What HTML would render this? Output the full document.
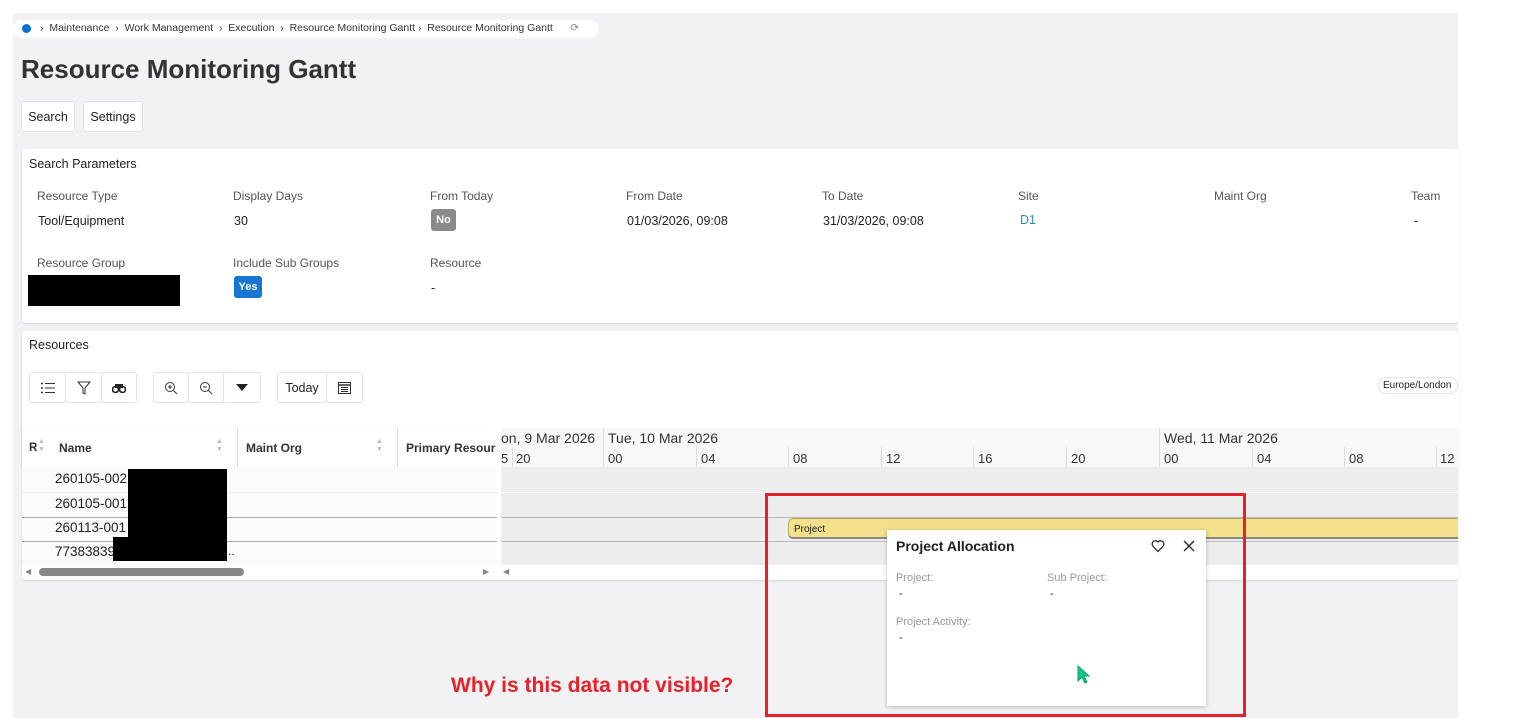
<!DOCTYPE html>
<html><head><meta charset="utf-8"><style>
*{margin:0;padding:0;box-sizing:border-box}
body{width:1522px;height:718px;background:#fff;font-family:"Liberation Sans",sans-serif;color:#222;position:relative;overflow:hidden}
.a{position:absolute}
.t{font-size:12px;color:#555}
.v{font-size:12.5px;color:#222}
.btn{position:absolute;background:#fff;border:1px solid #e2e2e6;border-radius:3px;font-size:12.5px;display:flex;align-items:center;justify-content:center}
.hr{position:absolute;height:1px;background:#ccc}
.tick{position:absolute;top:447px;height:20px;width:1px;background:#ddd}
.tl{position:absolute;top:451px;font-size:13px;color:#333}
</style></head><body>
<div class="a" style="left:13px;top:13px;width:1445px;height:705px;background:#f2f2f4"></div>
<div class="a" style="left:13px;top:20px;width:586px;height:18px;background:#fff;border-radius:9px"></div>
<div class="a" style="left:22px;top:24px;width:9px;height:9px;border-radius:50%;background:#0b6fd0"></div>
<div class="a" style="left:40px;top:22px;font-size:10.5px;color:#333;white-space:nowrap">›&nbsp; Maintenance &nbsp;›&nbsp; Work Management &nbsp;›&nbsp; Execution &nbsp;›&nbsp; Resource Monitoring Gantt › &nbsp;Resource Monitoring Gantt &nbsp;&nbsp;&nbsp;&nbsp; <span style="color:#888">⟳</span></div>
<div class="a" style="left:21px;top:54px;font-size:26px;font-weight:bold;color:#333">Resource Monitoring Gantt</div>
<div class="btn" style="left:21px;top:101px;width:54px;height:31px">Search</div>
<div class="btn" style="left:83px;top:101px;width:60px;height:31px">Settings</div>

<div class="a" style="left:22px;top:149px;width:1436px;height:174px;background:#fff;border-radius:3px;box-shadow:0 1px 2px rgba(0,0,0,.12)"></div>
<div class="a" style="left:29px;top:157px;font-size:12.5px;color:#222">Search Parameters</div>
<div class="a t" style="left:37px;top:189px">Resource Type</div><div class="a v" style="left:38px;top:214px">Tool/Equipment</div>
<div class="a t" style="left:233px;top:189px">Display Days</div><div class="a v" style="left:234px;top:214px">30</div>
<div class="a t" style="left:430px;top:189px">From Today</div>
<div class="a" style="left:431px;top:209px;width:25px;height:22px;background:#8a8a8a;border-radius:3px;color:#fff;font-size:11px;font-weight:bold;text-align:center;line-height:22px">No</div>
<div class="a t" style="left:626px;top:189px">From Date</div><div class="a v" style="left:627px;top:214px">01/03/2026, 09:08</div>
<div class="a t" style="left:822px;top:189px">To Date</div><div class="a v" style="left:823px;top:214px">31/03/2026, 09:08</div>
<div class="a t" style="left:1018px;top:189px">Site</div><div class="a v" style="left:1020px;top:213px;color:#2a8ac0">D1</div>
<div class="a t" style="left:1214px;top:189px">Maint Org</div>
<div class="a t" style="left:1411px;top:189px">Team</div><div class="a v" style="left:1414px;top:214px">-</div>
<div class="a t" style="left:37px;top:256px">Resource Group</div>
<div class="a" style="left:28px;top:275px;width:152px;height:31px;background:#000"></div>
<div class="a t" style="left:233px;top:256px">Include Sub Groups</div>
<div class="a" style="left:234px;top:276px;width:28px;height:22px;background:#1776d2;border-radius:3px;color:#fff;font-size:11px;font-weight:bold;text-align:center;line-height:22px">Yes</div>
<div class="a t" style="left:430px;top:256px">Resource</div><div class="a v" style="left:431px;top:281px">-</div>

<div class="a" style="left:22px;top:331px;width:1436px;height:249px;background:#fff;border-radius:3px;box-shadow:0 1px 2px rgba(0,0,0,.12)"></div>
<div class="a" style="left:29px;top:338px;font-size:12.5px">Resources</div>
<div class="btn" style="left:29px;top:372px;width:37px;height:31px"><svg width="14" height="12" viewBox="0 0 14 12"><path d="M4 1.5h10M4 6h10M4 10.5h10" stroke="#333"/><path d="M0 1.5h2M0 6h2M0 10.5h2" stroke="#333" stroke-width="1.5"/></svg></div>
<div class="btn" style="left:65px;top:372px;width:37px;height:31px"><svg width="14" height="14" viewBox="0 0 14 14"><path d="M1 1h12L8 7v6L6 12V7z" fill="none" stroke="#333" stroke-width="1"/></svg></div>
<div class="btn" style="left:101px;top:372px;width:36px;height:31px"><svg width="14" height="10" viewBox="0 0 14 10"><circle cx="3.5" cy="6.5" r="3" fill="none" stroke="#222" stroke-width="1.6"/><circle cx="10.5" cy="6.5" r="3" fill="none" stroke="#222" stroke-width="1.6"/><path d="M3 1h8v4H3z" fill="#222"/></svg></div>
<div class="btn" style="left:153px;top:372px;width:36px;height:31px"><svg width="14" height="14" viewBox="0 0 14 14"><circle cx="6" cy="6" r="4.5" fill="none" stroke="#333"/><path d="M9.5 9.5L13 13M4 6h4M6 4v4" stroke="#333"/></svg></div>
<div class="btn" style="left:188px;top:372px;width:36px;height:31px"><svg width="14" height="14" viewBox="0 0 14 14"><circle cx="6" cy="6" r="4.5" fill="none" stroke="#333"/><path d="M9.5 9.5L13 13M4 6h4" stroke="#333"/></svg></div>
<div class="btn" style="left:223px;top:372px;width:38px;height:31px"><svg width="12" height="7"><path d="M0 0h12L6 7z" fill="#222"/></svg></div>
<div class="btn" style="left:277px;top:372px;width:50px;height:31px">Today</div>
<div class="btn" style="left:326px;top:372px;width:37px;height:31px"><svg width="13" height="13" viewBox="0 0 13 13"><rect x="0.5" y="1.5" width="12" height="11" fill="none" stroke="#333"/><path d="M0.5 4h12" stroke="#333" stroke-width="1.5"/><path d="M3 6.5h7M3 8.5h7M3 10.5h7" stroke="#333"/></svg></div>
<div class="a" style="left:1378px;top:377px;width:80px;height:17px;border:1px solid #e4e4e4;border-radius:8px;font-size:10px;line-height:15px;padding-left:4px">Europe/London</div>

<!-- grid -->
<div class="a" style="left:22px;top:428px;width:475px;height:39px;background:#fff;box-shadow:0 1px 2px rgba(0,0,0,.1)"></div>
<div class="a" style="left:29px;top:442px;font-size:11.5px;font-weight:bold;color:#333">R</div>
<div class="a" style="left:38px;top:438px;font-size:7px;color:#bbb;line-height:8px">▲<br>▼</div>
<div class="a" style="left:59px;top:441px;font-size:12px;font-weight:bold;color:#333">Name</div>
<div class="a" style="left:216px;top:438px;font-size:7px;color:#bbb;line-height:8px">▲<br>▼</div>
<div class="a" style="left:237px;top:428px;width:1px;height:39px;background:#ddd"></div>
<div class="a" style="left:246px;top:441px;font-size:12px;font-weight:bold;color:#333">Maint Org</div>
<div class="a" style="left:376px;top:438px;font-size:7px;color:#bbb;line-height:8px">▲<br>▼</div>
<div class="a" style="left:397px;top:428px;width:1px;height:39px;background:#ddd"></div>
<div class="a" style="left:406px;top:441px;font-size:12px;font-weight:bold;color:#333;width:90px;overflow:hidden;white-space:nowrap">Primary Resource</div>
<div class="a" style="left:22px;top:467px;width:475px;height:98px;background:#fafafa"></div>
<div class="hr" style="left:22px;top:492px;width:475px;background:#eee"></div>
<div class="hr" style="left:22px;top:517px;width:475px;background:#aaa"></div>
<div class="hr" style="left:22px;top:541px;width:475px;background:#aaa"></div>
<div class="a v" style="left:55px;top:471px;font-size:13.5px">260105-002</div>
<div class="a v" style="left:55px;top:496px;font-size:13.5px">260105-001</div>
<div class="a v" style="left:55px;top:520px;font-size:13.5px">260113-001</div>
<div class="a v" style="left:55px;top:544px;font-size:13.5px">77383839</div>
<div class="a v" style="left:228px;top:544px;font-size:12px">..</div>
<div class="a" style="left:128px;top:469px;width:99px;height:68px;background:#000"></div>
<div class="a" style="left:113px;top:537px;width:114px;height:24px;background:#000"></div>
<div class="a" style="left:25px;top:567px;font-size:8px;color:#888">◀</div>
<div class="a" style="left:39px;top:568px;width:205px;height:8px;background:#888;border-radius:4px"></div>
<div class="a" style="left:483px;top:567px;font-size:8px;color:#888">▶</div>

<!-- gantt -->
<div class="a" style="left:501px;top:428px;width:957px;height:39px;background:#f8f8f8"></div>
<div class="a" style="left:501px;top:467px;width:957px;height:98px;background:#ededed"></div>
<div class="hr" style="left:501px;top:492px;width:957px;background:#fff"></div>
<div class="hr" style="left:501px;top:517px;width:957px;background:#bbb"></div>
<div class="hr" style="left:501px;top:541px;width:957px;background:#bbb"></div>
<div class="a" style="left:503px;top:567px;font-size:8px;color:#888">◀</div>
<div class="a" style="left:501px;top:430px;font-size:14px;color:#333">on, 9 Mar 2026</div>
<div class="a" style="left:603px;top:428px;width:1px;height:39px;background:#ddd"></div>
<div class="a" style="left:608px;top:430px;font-size:14px;color:#333">Tue, 10 Mar 2026</div>
<div class="a" style="left:1159px;top:428px;width:1px;height:39px;background:#ddd"></div>
<div class="a" style="left:1164px;top:430px;font-size:14px;color:#333">Wed, 11 Mar 2026</div>
<div class="tl" style="left:501px">5</div><div class="tick" style="left:512px"></div><div class="tl" style="left:516px">20</div>
<div class="tl" style="left:608px">00</div>
<div class="tick" style="left:696px"></div><div class="tl" style="left:701px">04</div>
<div class="tick" style="left:788px"></div><div class="tl" style="left:793px">08</div>
<div class="tick" style="left:881px"></div><div class="tl" style="left:886px">12</div>
<div class="tick" style="left:973px"></div><div class="tl" style="left:978px">16</div>
<div class="tick" style="left:1066px"></div><div class="tl" style="left:1071px">20</div>
<div class="tl" style="left:1164px">00</div>
<div class="tick" style="left:1252px"></div><div class="tl" style="left:1257px">04</div>
<div class="tick" style="left:1344px"></div><div class="tl" style="left:1349px">08</div>
<div class="tick" style="left:1436px"></div><div class="tl" style="left:1440px">12</div>
<div class="a" style="left:788px;top:518px;width:670px;height:21px;background:#f2e08a;border:1px solid #b9a95a;border-right:none;border-radius:5px 0 0 5px;border-bottom:2px solid #888"></div>
<div class="a" style="left:794px;top:524px;font-size:10px;color:#222">Project</div>

<!-- popup -->
<div class="a" style="left:887px;top:530px;width:319px;height:176px;background:#fff;box-shadow:0 1px 4px rgba(0,0,0,.25)"></div>
<div class="a" style="left:896px;top:538px;font-size:14px;font-weight:bold;color:#222">Project Allocation</div>
<svg class="a" style="left:1151px;top:539px" width="14" height="14" viewBox="0 0 14 14"><path d="M7 12.5L1.8 7A3 3 0 0 1 7 3a3 3 0 0 1 5.2 4z" fill="none" stroke="#222" stroke-width="1.2"/></svg>
<svg class="a" style="left:1183px;top:540px" width="12" height="12"><path d="M1 1l10 10M11 1L1 11" stroke="#222" stroke-width="1.3"/></svg>
<div class="a" style="left:896px;top:572px;font-size:11px;color:#999">Project:</div>
<div class="a" style="left:899px;top:588px;font-size:11px">-</div>
<div class="a" style="left:1047px;top:572px;font-size:11px;color:#999">Sub Project:</div>
<div class="a" style="left:1050px;top:588px;font-size:11px">-</div>
<div class="a" style="left:896px;top:616px;font-size:11px;color:#999">Project Activity:</div>
<div class="a" style="left:899px;top:632px;font-size:11px">-</div>
<svg class="a" style="left:1077px;top:665px" width="14" height="20" viewBox="0 0 14 20"><path d="M1 1v15l4-4 3 6 2-1-3-6h5z" fill="#17c28e" stroke="#0a5" stroke-width="1"/></svg>

<div class="a" style="left:765px;top:493px;width:481px;height:224px;border:3px solid #e8202a"></div>
<div class="a" style="left:451px;top:674px;font-size:21px;font-weight:bold;color:#e8202a">Why is this data not visible?</div>
</body></html>
